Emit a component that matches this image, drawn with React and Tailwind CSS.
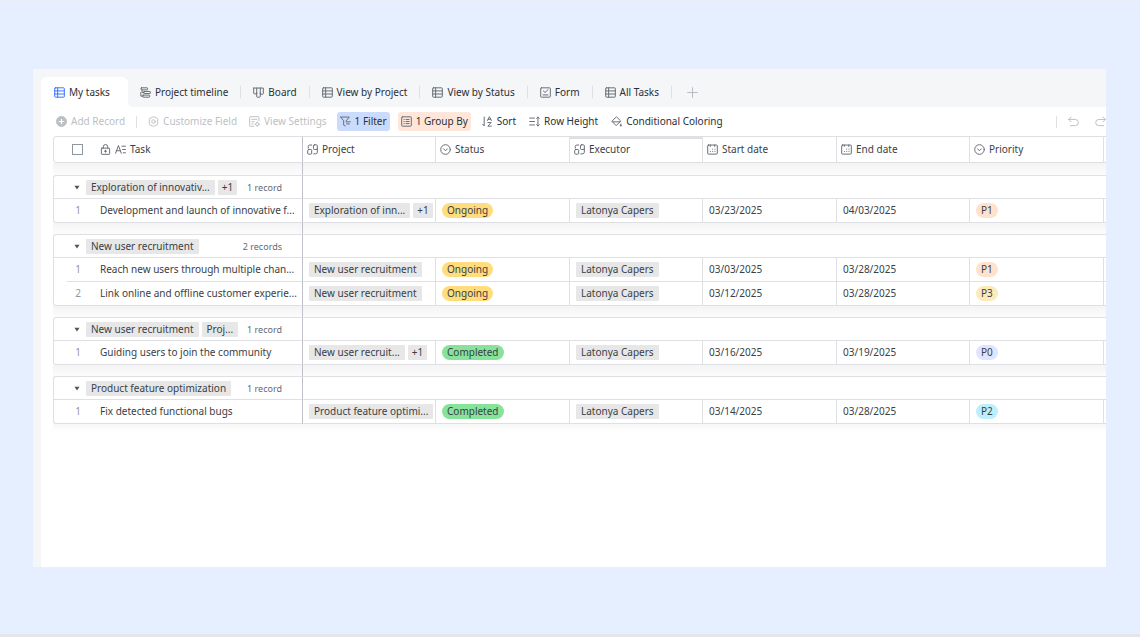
import React from "react";

const Svg = ({ children, className = "text-[#646a73]", size = "size-[11px]" }) => (
  <svg
    viewBox="0 0 16 16"
    fill="none"
    stroke="currentColor"
    strokeWidth="1.4"
    strokeLinecap="round"
    strokeLinejoin="round"
    aria-hidden="true"
    className={`${size} shrink-0 ${className}`}
  >
    {children}
  </svg>
);

const GridIcon = ({ className }) => (
  <Svg className={className}>
    <rect x="1" y="1.2" width="14" height="13.6" rx="1" />
    <path d="M5.3 1.2v13.6M1 5.7h14M1 10.2h14" />
  </Svg>
);
const TimelineIcon = () => (
  <Svg>
    <rect x="1.5" y="1.2" width="9.5" height="3" rx="0.6" />
    <rect x="5.5" y="6.5" width="9.5" height="3" rx="0.6" />
    <rect x="4" y="11.8" width="10" height="3" rx="0.6" />
    <path d="M3 4.2V8h2.5M1.2 8v5.3H4" />
  </Svg>
);
const BoardIcon = () => (
  <Svg>
    <path d="M1 1.5h14v8a1 1 0 0 1-1 1h-3.4V1.5M1 1.5v7.4a1 1 0 0 0 1 1h3.4V1.5M5.4 8.500v5.300a1 1 0 0 0 1 1h3.200a1 1 0 0 0 1-1V8.500" />
  </Svg>
);
const FormIcon = () => (
  <Svg>
    <rect x="1" y="1.2" width="14" height="13.6" rx="1" />
    <path d="M5 5.800l2.300 2.200L11.500 4M4.500 11.500h7" />
  </Svg>
);
const PlusIcon = () => (
  <Svg className="text-[#b4b8bf]">
    <path d="M8 1v14M1 8h14" />
  </Svg>
);
const AddIcon = () => (
  <Svg className="text-[#bbbfc4]">
    <circle cx="8" cy="8" r="7.300" fill="currentColor" />
    <path d="M8 4.800v6.400M4.800 8h6.400" stroke="#fff" strokeWidth="1.800" />
  </Svg>
);
const HexIcon = () => (
  <Svg className="text-[#bbbfc4]">
    <path d="M6.300 1.700Q8 0 9.700 1.700L12.200 2.700Q14.300 3 14.100 5.200V10.800Q14.300 13 12.200 13.300L9.700 14.300Q8 16 6.300 14.300L3.800 13.300Q1.700 13 1.900 10.800V5.200Q1.700 3 3.800 2.700Z" />
    <circle cx="8" cy="8" r="2.600" />
  </Svg>
);
const ViewSettingsIcon = () => (
  <Svg className="text-[#bbbfc4]">
    <path d="M14.500 7V2a1 1 0 0 0-1-1H2a1 1 0 0 0-1 1v12a1 1 0 0 0 1 1h5M4 4.800h7.500M4 8.200h3.500M4 11.500h2" />
    <circle cx="12" cy="12" r="2.300" />
    <path d="M12 8.800v.9M12 14.300v.9M8.800 12h.9M14.300 12h.9" />
  </Svg>
);
const FilterIcon = () => (
  <Svg>
    <path d="M1 1.500h12.500L9 7v1.500M1 1.500 5.300 7v6.200L7.500 14.500M10 8.500h5M9.500 11.500h4" />
  </Svg>
);
const GroupIcon = () => (
  <Svg>
    <rect x="1" y="1.200" width="14" height="13.600" rx="1" />
    <path d="M4.300 5h.4M7.300 5h4.500M4.300 8h.4M7.300 8h4.500M4.300 11h.4M7.300 11h4.500" />
  </Svg>
);
const SortIcon = () => (
  <Svg>
    <path d="M3.200 1.500v13L1 12M8 6.500l2.800-5.500 2.800 5.500M9 4.800h3.600M8.500 9.500h4.800L8.500 14.800h5" />
  </Svg>
);
const RowHeightIcon = () => (
  <Svg>
    <path d="M1 3h7M1 8h7M1 13h7M13 1.500v13M11 3.500l2-2 2 2M11 12.500l2 2 2-2" />
  </Svg>
);
const BucketIcon = () => (
  <Svg>
    <path d="M7.500 1.500 1.300 7.700 7.500 14l6.200-6.300zM2.500 8.500h10.300" />
    <path d="M14.300 11.500c.9 1.200 1.200 1.800 1.200 2.300a1.200 1.200 0 0 1-2.400 0c0-.5.300-1.100 1.200-2.300z" fill="currentColor" strokeWidth="0.500" />
  </Svg>
);
const UndoIcon = () => (
  <Svg className="text-[#bbbfc4]">
    <path d="M4.500 1.500 1 5l3.500 3.500M1 5h9.500a4.500 4.500 0 0 1 0 9H3.500" />
  </Svg>
);
const RedoIcon = () => (
  <Svg className="text-[#bbbfc4]">
    <path d="M11.500 1.500 15 5l-3.500 3.500M15 5H5.500a4.500 4.500 0 0 0 0 9h7" />
  </Svg>
);
const LockIcon = () => (
  <Svg>
    <rect x="2" y="6" width="12" height="9" rx="0.800" />
    <path d="M4.800 6V4a3.200 3.200 0 0 1 6.400 0v2M8 9v3M6.500 10.500h3" />
  </Svg>
);
const TextIcon = () => (
  <Svg>
    <path d="M.800 13.500 5 2.200l4.200 11.300M2.400 9.800h5.200M10 3.200h5.200M11 8h4.200M12 12.800h3.200" />
  </Svg>
);
const LinkIcon = () => (
  <Svg>
    <path d="M6.800 1.500H4A2.200 2.200 0 0 0 1.800 3.700V6" />
    <rect x="1" y="8" width="5.800" height="6.800" rx="1.300" />
    <rect x="9.400" y="1.200" width="5.600" height="6.800" rx="1.300" />
    <path d="M15 6.500v5.300a2.500 2.500 0 0 1-2.500 2.500H9.800" />
  </Svg>
);
const SelectIcon = () => (
  <Svg>
    <circle cx="8" cy="8" r="7" />
    <path d="M5.200 7 8 9.800 10.800 7" />
  </Svg>
);
const CalendarIcon = () => (
  <Svg>
    <rect x="1" y="1.500" width="14" height="13.200" rx="1" />
    <path d="M4.800 1.500v2M11.200 1.500v2M8.200 7.500h.2M11.500 7.500h.2M4.800 10.800h.2M8.200 10.800h.2M11.500 10.800h.2" />
  </Svg>
);

const tabs = [
  { label: "Project timeline", icon: TimelineIcon },
  { label: "Board", icon: BoardIcon },
  { label: "View by Project", icon: GridIcon },
  { label: "View by Status", icon: GridIcon },
  { label: "Form", icon: FormIcon },
  { label: "All Tasks", icon: GridIcon },
];

const columns = [
  { label: "Project", icon: LinkIcon },
  { label: "Status", icon: SelectIcon },
  { label: "Executor", icon: LinkIcon, active: true },
  { label: "Start date", icon: CalendarIcon },
  { label: "End date", icon: CalendarIcon },
  { label: "Priority", icon: SelectIcon },
];

const groups = [
  {
    tags: ["Exploration of innovativ...", "+1"],
    count: "1 record",
    rows: [
      { task: "Development and launch of innovative f...", project: ["Exploration of inn...", "+1"], status: "Ongoing", start: "03/23/2025", end: "04/03/2025", priority: "P1" },
    ],
  },
  {
    tags: ["New user recruitment"],
    count: "2 records",
    rows: [
      { task: "Reach new users through multiple chan...", project: ["New user recruitment"], status: "Ongoing", start: "03/03/2025", end: "03/28/2025", priority: "P1" },
      { task: "Link online and offline customer experie...", project: ["New user recruitment"], status: "Ongoing", start: "03/12/2025", end: "03/28/2025", priority: "P3" },
    ],
  },
  {
    tags: ["New user recruitment", "Proj..."],
    count: "1 record",
    rows: [
      { task: "Guiding users to join the community", project: ["New user recruit...", "+1"], status: "Completed", start: "03/16/2025", end: "03/19/2025", priority: "P0" },
    ],
  },
  {
    tags: ["Product feature optimization"],
    count: "1 record",
    rows: [
      { task: "Fix detected functional bugs", project: ["Product feature optimi..."], status: "Completed", start: "03/14/2025", end: "03/28/2025", priority: "P2" },
    ],
  },
];

const pillColors = {
  Ongoing: "bg-[#ffdc7d]",
  Completed: "bg-[#87e29a]",
  P0: "bg-[#dfe5ff]",
  P1: "bg-[#ffe2cb]",
  P2: "bg-[#bdeefc]",
  P3: "bg-[#fceabb]",
};

const Tags = ({ items }) => (
  <div className="flex gap-[3px]">
    {items.map((t) => (
      <span
        key={t}
        className={`h-[15px] shrink-0 rounded-[1px] bg-[#e7e7e7] leading-[15px] ${t === "+1" ? "px-1" : "px-[5px]"}`}
      >
        {t}
      </span>
    ))}
  </div>
);

const Pill = ({ label }) => (
  <span className={`block h-[15px] w-fit rounded-full px-[5px] leading-[15px] ${pillColors[label]}`}>{label}</span>
);

const Divider = () => <span className="h-3 w-px shrink-0 bg-[#dee0e3]" />;

const Tool = ({ icon: Icon, label, className = "" }) => (
  <button type="button" className={`flex h-[19px] shrink-0 items-center gap-1 rounded-[3px] px-[3px] ${className}`}>
    <Icon />
    {label}
  </button>
);

const Spacer = ({ height = "h-[11px]" }) => (
  <tr className={height} aria-hidden="true">
    <td colSpan={3} className="border-r border-r-[#bfc1c8] bg-linear-to-b from-[#f4f4f5] to-[#fcfcfc] p-0" />
    <td colSpan={7} className="bg-linear-to-b from-[#f4f4f5] to-[#fcfcfc] p-0" />
  </tr>
);

function Group({ group }) {
  return (
    <>
      <tr className="h-[23px]">
        <td colSpan={3} className="rounded-tl-[3px] border-t border-r border-l border-[#dfe0e3] border-r-[#bfc1c8] p-0">
          <div className="flex items-center pr-5 pl-5">
            <button type="button" aria-label="Collapse group" className="mr-[6px] flex size-[6px] items-center justify-center">
              <svg viewBox="0 0 7 5" className="h-[5px] w-[6px]" aria-hidden="true">
                <path d="M.5.5h6L3.500 4.800z" fill="#51565d" />
              </svg>
            </button>
            <Tags items={group.tags} />
            <span className="ml-auto text-[9px] whitespace-nowrap text-[#646a73]">{group.count}</span>
          </div>
        </td>
        <td colSpan={7} className="border-t border-[#dfe0e3] p-0" />
      </tr>
      {group.rows.map((row, i) => {
        const last = i === group.rows.length - 1;
        const cell = `border-t border-r border-[#dfe0e3] py-0 pr-0 pl-[6px] ${last ? "border-b" : ""}`;
        return (
          <tr key={row.task} className={last ? "h-[25px]" : "h-6"}>
            <td className={`border-l border-[#dfe0e3] p-0 ${i === 0 ? "border-t" : ""} ${last ? "rounded-bl-[3px] border-b" : ""}`} />
            <td className={`border-t border-[#dfe0e3] p-0 text-center text-[#8f959e] ${last ? "border-b" : ""}`}>{i + 1}</td>
            <td className={`${cell} border-r-[#bfc1c8] whitespace-nowrap`}>
              <div className="pl-[5px]">{row.task}</div>
            </td>
            <td className={cell}><Tags items={row.project} /></td>
            <td className={cell}><Pill label={row.status} /></td>
            <td className={cell}><Tags items={["Latonya Capers"]} /></td>
            <td className={cell}>{row.start}</td>
            <td className={cell}>{row.end}</td>
            <td className={cell}><Pill label={row.priority} /></td>
            <td className={`border-t border-[#dfe0e3] p-0 ${last ? "border-b" : ""}`} />
          </tr>
        );
      })}
    </>
  );
}

export default function App() {
  return (
    <div className="flex min-h-screen flex-col border-t border-b-3 border-t-[#eaeef5] border-b-[#e3e5eb] bg-[#e5efff] pt-[68px] pr-[34px] pb-[67px] pl-[33px] font-['Noto_Sans',sans-serif] text-[10px] leading-[15px] text-[#2b2f36]">
      <main className="flex flex-1 flex-col overflow-hidden bg-[#f4f6f8] pt-2 pl-2">
        <nav className="flex h-[30px] shrink-0 items-center" aria-label="Views">
          <a
            href="#my-tasks"
            aria-current="page"
            className="relative flex h-full shrink-0 items-center gap-1 rounded-t-[6px] bg-white pr-[18px] pl-[13px] after:absolute after:bottom-0 after:left-full after:size-[5px] after:bg-[radial-gradient(circle_at_top_right,transparent_5px,white_5px)]"
          >
            <GridIcon className="text-[#3370ff]" />
            My tasks
          </a>
          {tabs.map(({ label, icon: Icon }) => (
            <React.Fragment key={label}>
              <a href="#view" className="flex shrink-0 items-center gap-1 px-3">
                <Icon />
                {label}
              </a>
              <Divider />
            </React.Fragment>
          ))}
          <button type="button" aria-label="Add view" className="ml-[15px]">
            <PlusIcon />
          </button>
        </nav>

        <section className="flex flex-1 flex-col bg-white">
          <div className="flex h-[29px] shrink-0 items-center pl-3" role="toolbar" aria-label="Table tools">
            <Tool icon={AddIcon} label="Add Record" className="mr-2 text-[#bbbfc4]" />
            <Divider />
            <Tool icon={HexIcon} label="Customize Field" className="mr-[6px] ml-2 text-[#bbbfc4]" />
            <Tool icon={ViewSettingsIcon} label="View Settings" className="mr-[7px] text-[#bbbfc4]" />
            <Tool icon={FilterIcon} label="1 Filter" className="mr-2 bg-[#cbdbfd]" />
            <Tool icon={GroupIcon} label="1 Group By" className="mr-2 bg-[#fee7da]" />
            <Tool icon={SortIcon} label="Sort" className="mr-[7px]" />
            <Tool icon={RowHeightIcon} label="Row Height" className="mr-[7px]" />
            <Tool icon={BucketIcon} label="Conditional Coloring" />
            <div className="ml-auto flex items-center">
              <Divider />
              <button type="button" aria-label="Undo" className="ml-[11px]"><UndoIcon /></button>
              <button type="button" aria-label="Redo" className="ml-4"><RedoIcon /></button>
            </div>
          </div>

          <div className="pl-3 text-[#3a3e45]">
            <table className="w-full table-fixed border-separate border-spacing-0 text-left">
              <colgroup>
                <col className="w-[14px]" />
                <col className="w-[22px]" />
                <col className="w-[214px]" />
                <col className="w-[133px]" />
                <col className="w-[134px]" />
                <col className="w-[133px]" />
                <col className="w-[134px]" />
                <col className="w-[133px]" />
                <col className="w-[134px]" />
                <col />
              </colgroup>
              <thead>
                <tr className="h-[27px]">
                  <th colSpan={3} className="rounded-l-[4px] border border-[#dfe0e3] border-r-[#bfc1c8] p-0 font-normal">
                    <div className="flex items-center pl-[18px]">
                      <input type="checkbox" aria-label="Select all records" className="mr-[17px] size-[11px] appearance-none border border-[#8f959e] bg-white" />
                      <LockIcon />
                      <span className="ml-1 flex items-center gap-1">
                        <TextIcon />
                        Task
                      </span>
                    </div>
                  </th>
                  {columns.map(({ label, icon: Icon, active }) => (
                    <th
                      key={label}
                      className={`border-t border-r border-b border-[#dfe0e3] py-0 pr-0 pl-1 font-normal ${active ? "shadow-[inset_0_2px_0_#dfe0e3]" : ""}`}
                    >
                      <span className="flex items-center gap-1">
                        <Icon />
                        {label}
                      </span>
                    </th>
                  ))}
                  <th className="border-y border-[#dfe0e3] p-0" />
                </tr>
              </thead>
              <tbody>
                <Spacer height="h-3" />
                {groups.map((group, i) => (
                  <React.Fragment key={i}>
                    {i > 0 && <Spacer />}
                    <Group group={group} />
                  </React.Fragment>
                ))}
              </tbody>
            </table>
            <div className="h-2 bg-linear-to-b from-[#f7f7f8] to-white" />
          </div>
        </section>
      </main>
    </div>
  );
}
